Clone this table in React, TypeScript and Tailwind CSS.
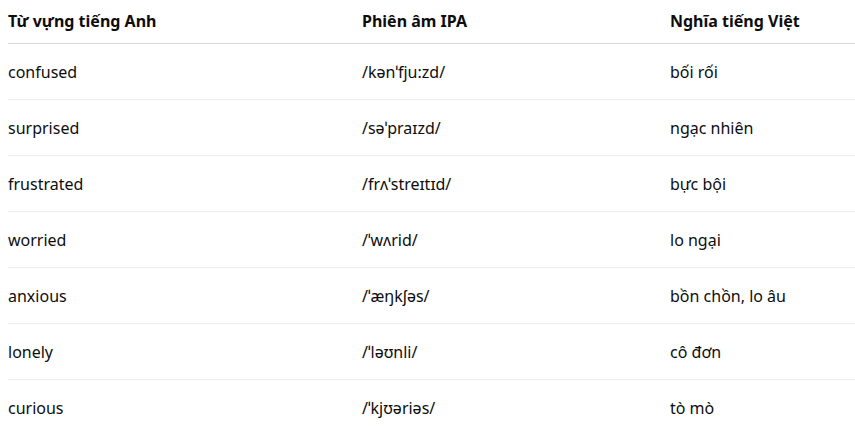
import React from 'react';

const rows = [
  { en: 'confused', ipa: '/kənˈfju:zd/', vi: 'bối rối' },
  { en: 'surprised', ipa: '/səˈpraɪzd/', vi: 'ngạc nhiên' },
  { en: 'frustrated', ipa: '/frʌˈstreɪtɪd/', vi: 'bực bội' },
  { en: 'worried', ipa: '/ˈwʌrid/', vi: 'lo ngại' },
  { en: 'anxious', ipa: '/ˈæŋkʃəs/', vi: 'bồn chồn, lo âu' },
  { en: 'lonely', ipa: '/ˈləʊnli/', vi: 'cô đơn' },
  { en: 'curious', ipa: '/ˈkjʊəriəs/', vi: 'tò mò' },
];

export default function App() {
  return (
    <div className="w-[855px] h-[430px] overflow-hidden bg-white pl-2 text-[16px] text-[#0d0d0d] font-['Noto_Sans','Open_Sans',sans-serif]">
      <div className="grid grid-cols-[354px_308px_1fr] h-[44px] items-end pb-[10px] border-b border-[#d9d9d9] font-bold">
        <span>Từ vựng tiếng Anh</span>
        <span>Phiên âm IPA</span>
        <span>Nghĩa tiếng Việt</span>
      </div>
      {rows.map((r, i) => (
        <div
          key={r.en}
          className={
            'grid grid-cols-[354px_308px_1fr] h-[56px] items-center ' +
            (i < rows.length - 1 ? 'border-b border-[#ececec]' : '')
          }
        >
          <span>{r.en}</span>
          <span>{r.ipa}</span>
          <span>{r.vi}</span>
        </div>
      ))}
    </div>
  );
}
